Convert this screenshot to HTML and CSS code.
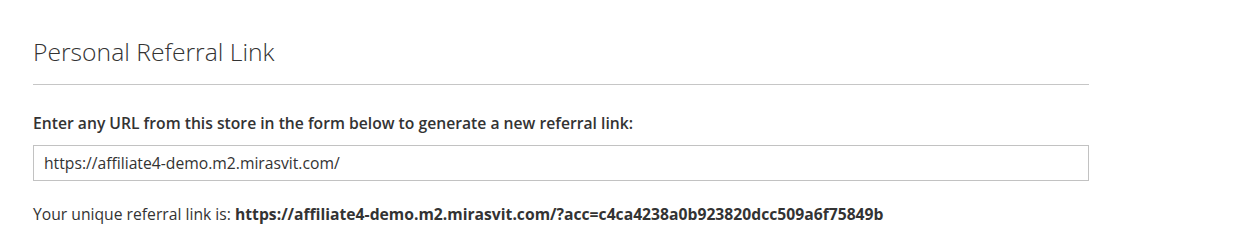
FILE: index.html
```html
<!DOCTYPE html>
<html>
<head>
<meta charset="utf-8">
<link rel="stylesheet" href="styles.css">
</head>
<body>
<div class="page">
  <div class="block">
    <div class="block-title"><strong>Personal Referral Link</strong></div>
    <div class="block-content">
      <label class="label" for="url">Enter any URL from this store in the form below to generate a new referral link:</label>
      <input class="input" id="url" type="text" value="https://affiliate4-demo.m2.mirasvit.com/">
      <p class="result">Your unique referral link is: <strong>https://affiliate4-demo.m2.mirasvit.com/?acc=c4ca4238a0b923820dcc509a6f75849b</strong></p>
    </div>
  </div>
</div>
</body>
</html>
```

FILE: styles.css
```css
html, body {
  margin: 0;
  padding: 0;
  background: #fff;
}
body {
  font-family: "Open Sans", "Liberation Sans", sans-serif;
  color: #333;
  font-size: 15.7px;
  line-height: 22px;
}
.page {
  padding: 36px 0 0 33px;
}
.block {
  width: 1056px;
}
.block-title {
  border-bottom: 1px solid #c6c6c6;
  padding-bottom: 16px;
}
.block-title strong {
  font-size: 24.7px;
  line-height: 32px;
  font-weight: 300;
  display: block;
}
.block-content {
  display: flex;
  flex-direction: column;
  padding-top: 27px;
}
.label {
  font-weight: 600;
  margin-bottom: 11px;
}
.input {
  box-sizing: border-box;
  height: 36px;
  width: 100%;
  border: 1px solid #c2c2c2;
  padding: 0 10px;
  font-family: "Open Sans", "Liberation Sans", sans-serif;
  font-size: 15.7px;
  color: #333;
  background: #fff;
  margin: 0;
  outline: none;
}
.result {
  margin: 22px 0 0;
}
.result strong {
  font-weight: 700;
}
```
